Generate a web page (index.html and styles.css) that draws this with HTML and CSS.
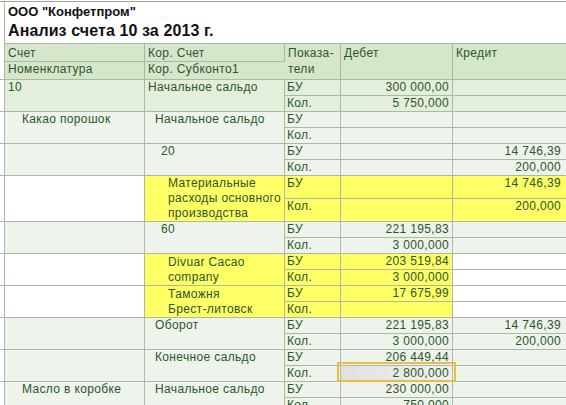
FILE: index.html
```html
<!DOCTYPE html>
<html lang="ru">
<head>
<meta charset="utf-8">
<title>Анализ счета 10</title>
<link rel="stylesheet" href="styles.css">
</head>
<body>
<div class="sheet">
  <div class="title">
    <div class="org">ООО "Конфетпром"</div>
    <div class="name">Анализ счета 10 за 2013 г.</div>
  </div>
  <table class="report">
    <colgroup>
      <col class="km"><col class="k1"><col class="k2"><col class="k3"><col class="k4"><col class="k5">
    </colgroup>
    <tr class="h1">
      <td class="m" rowspan="2"></td>
      <th>Счет</th>
      <th>Кор. Счет</th>
      <th class="pk" rowspan="2">Показа-<br>тели</th>
      <th class="top" rowspan="2">Дебет</th>
      <th class="top" rowspan="2">Кредит</th>
    </tr>
    <tr class="h2">
      <th>Номенклатура</th>
      <th>Кор. Субконто1</th>
    </tr>

    <tr class="g1">
      <td class="m" rowspan="2"></td>
      <td class="c1" rowspan="2">10</td>
      <td class="c2" rowspan="2">Начальное сальдо</td>
      <td class="c3">БУ</td><td class="num">300 000,00</td><td class="num n5"></td>
    </tr>
    <tr class="g1"><td class="c3">Кол.</td><td class="num">5 750,000</td><td class="num n5"></td></tr>

    <tr class="g2">
      <td class="m" rowspan="2"></td>
      <td class="c1 l2" rowspan="2">Какао порошок</td>
      <td class="c2 l2" rowspan="2">Начальное сальдо</td>
      <td class="c3">БУ</td><td class="num"></td><td class="num n5"></td>
    </tr>
    <tr class="g2"><td class="c3">Кол.</td><td class="num"></td><td class="num n5"></td></tr>

    <tr class="g2">
      <td class="m" rowspan="2"></td>
      <td class="c1" rowspan="2"></td>
      <td class="c2 l3" rowspan="2">20</td>
      <td class="c3">БУ</td><td class="num"></td><td class="num n5">14 746,39</td>
    </tr>
    <tr class="g2"><td class="c3">Кол.</td><td class="num"></td><td class="num n5">200,000</td></tr>

    <tr class="yw">
      <td class="m" rowspan="2"></td>
      <td class="c1 w" rowspan="2"></td>
      <td class="c2 l4 y wrap" rowspan="2">Материальные<br>расходы основного<br>производства</td>
      <td class="c3 y">БУ</td><td class="num y"></td><td class="num n5 y">14 746,39</td>
    </tr>
    <tr class="yw"><td class="c3 y">Кол.</td><td class="num y"></td><td class="num n5 y">200,000</td></tr>

    <tr class="g2">
      <td class="m" rowspan="2"></td>
      <td class="c1" rowspan="2"></td>
      <td class="c2 l3" rowspan="2">60</td>
      <td class="c3">БУ</td><td class="num">221 195,83</td><td class="num n5"></td>
    </tr>
    <tr class="g2"><td class="c3">Кол.</td><td class="num">3 000,000</td><td class="num n5"></td></tr>

    <tr>
      <td class="m" rowspan="2"></td>
      <td class="c1 w" rowspan="2"></td>
      <td class="c2 l4 y wrap2" rowspan="2">Divuar Cacao<br>company</td>
      <td class="c3 y">БУ</td><td class="num y">203 519,84</td><td class="num n5 w"></td>
    </tr>
    <tr><td class="c3 y">Кол.</td><td class="num y">3 000,000</td><td class="num n5 w"></td></tr>

    <tr>
      <td class="m" rowspan="2"></td>
      <td class="c1 w" rowspan="2"></td>
      <td class="c2 l4 y wrap2" rowspan="2">Таможня<br>Брест-литовск</td>
      <td class="c3 y">БУ</td><td class="num y">17 675,99</td><td class="num n5 w"></td>
    </tr>
    <tr><td class="c3 y">Кол.</td><td class="num y"></td><td class="num n5 w"></td></tr>

    <tr class="g2">
      <td class="m" rowspan="2"></td>
      <td class="c1" rowspan="2"></td>
      <td class="c2 l2" rowspan="2">Оборот</td>
      <td class="c3">БУ</td><td class="num">221 195,83</td><td class="num n5">14 746,39</td>
    </tr>
    <tr class="g2"><td class="c3">Кол.</td><td class="num">3 000,000</td><td class="num n5">200,000</td></tr>

    <tr class="g2">
      <td class="m" rowspan="2"></td>
      <td class="c1" rowspan="2"></td>
      <td class="c2 l2" rowspan="2">Конечное сальдо</td>
      <td class="c3">БУ</td><td class="num">206 449,44</td><td class="num n5"></td>
    </tr>
    <tr class="g2"><td class="c3">Кол.</td><td class="num sel">2 800,000</td><td class="num n5"></td></tr>

    <tr class="g2">
      <td class="m" rowspan="2"></td>
      <td class="c1 l2" rowspan="2">Масло в коробке</td>
      <td class="c2 l2" rowspan="2">Начальное сальдо</td>
      <td class="c3">БУ</td><td class="num">230 000,00</td><td class="num n5"></td>
    </tr>
    <tr class="g2"><td class="c3">Кол.</td><td class="num">750,000</td><td class="num n5"></td></tr>
  </table>
</div>
</body>
</html>
```

FILE: styles.css
```css
html, body {
  margin: 0;
  padding: 0;
  background: #ffffff;
  overflow: hidden;
}

body {
  font-family: "Liberation Sans", Arial, sans-serif;
  font-size: 12px;
  color: #2b572b;
}

.sheet {
  margin-top: 1px;
  border-top: 1px solid #a3a3a3;
}

.title {
  box-sizing: border-box;
  height: 41px;
  margin-left: 4px;
  padding: 2px 0 0 3px;
  border-left: 1px solid #aab9a5;
  color: #111111;
}

.org {
  font-weight: bold;
  font-size: 13px;
  line-height: 16px;
}

.name {
  margin-top: 1px;
  font-weight: bold;
  font-size: 16px;
  line-height: 20px;
  letter-spacing: 0.1px;
}

.report {
  border-collapse: separate;
  border-spacing: 0;
  table-layout: fixed;
  width: 566px;
  letter-spacing: 0.35px;
}

.km { width: 5px; }
.k1 { width: 140px; }
.k2 { width: 140px; }
.k3 { width: 56px; }
.k4 { width: 112px; }
.k5 { width: 113px; }

.report td,
.report th {
  box-sizing: border-box;
  padding: 0 0 1px 3px;
  border-right: 1px solid #aab9a5;
  border-bottom: 1px solid #aab9a5;
  vertical-align: top;
  white-space: nowrap;
  overflow: hidden;
  line-height: 14px;
  font-weight: normal;
  text-align: left;
}

.report th {
  background: #d5e6cb;
}

.report td.m {
  padding: 0;
  background: #ffffff;
}

.h1 th {
  border-top: 1px solid #aab9a5;
  padding-top: 1px;
  padding-bottom: 0;
  line-height: 16px;
}

.h2 th {
  padding-top: 0;
  padding-bottom: 2px;
  line-height: 15px;
}

.h1 th.pk {
  line-height: 16px;
}

.g1 td { background: #e3eedb; }
.g2 td { background: #eef3ec; }

.report td.y { background: #ffff66; }
.report td.w { background: #ffffff; }

.report td.c3 { padding-left: 2px; }

.report td.l2 { padding-left: 17px; }
.report td.c2.l2 { padding-left: 10px; }
.report td.c2.l3 { padding-left: 16px; }
.report td.c2.l4 { padding-left: 23px; }

.report td.num {
  text-align: right;
  padding-left: 0;
  padding-right: 3px;
}

.report td.n5 {
  padding-right: 5px;
  border-right: none;
}

.report th:last-child {
  border-right: none;
}

.report td.wrap {
  line-height: 15px;
  padding-bottom: 0;
}

.report td.wrap2 {
  line-height: 15px;
  padding-top: 1px;
  padding-bottom: 0;
}

.report td.sel {
  position: relative;
  overflow: visible;
  background: linear-gradient(to right, #e1e1e1, #f1f1f1);
}

.report td.sel::after {
  content: "";
  position: absolute;
  top: -4px;
  bottom: -1px;
  left: -4px;
  right: -4px;
  border: 2px solid #e8bf43;
  pointer-events: none;
}
```
